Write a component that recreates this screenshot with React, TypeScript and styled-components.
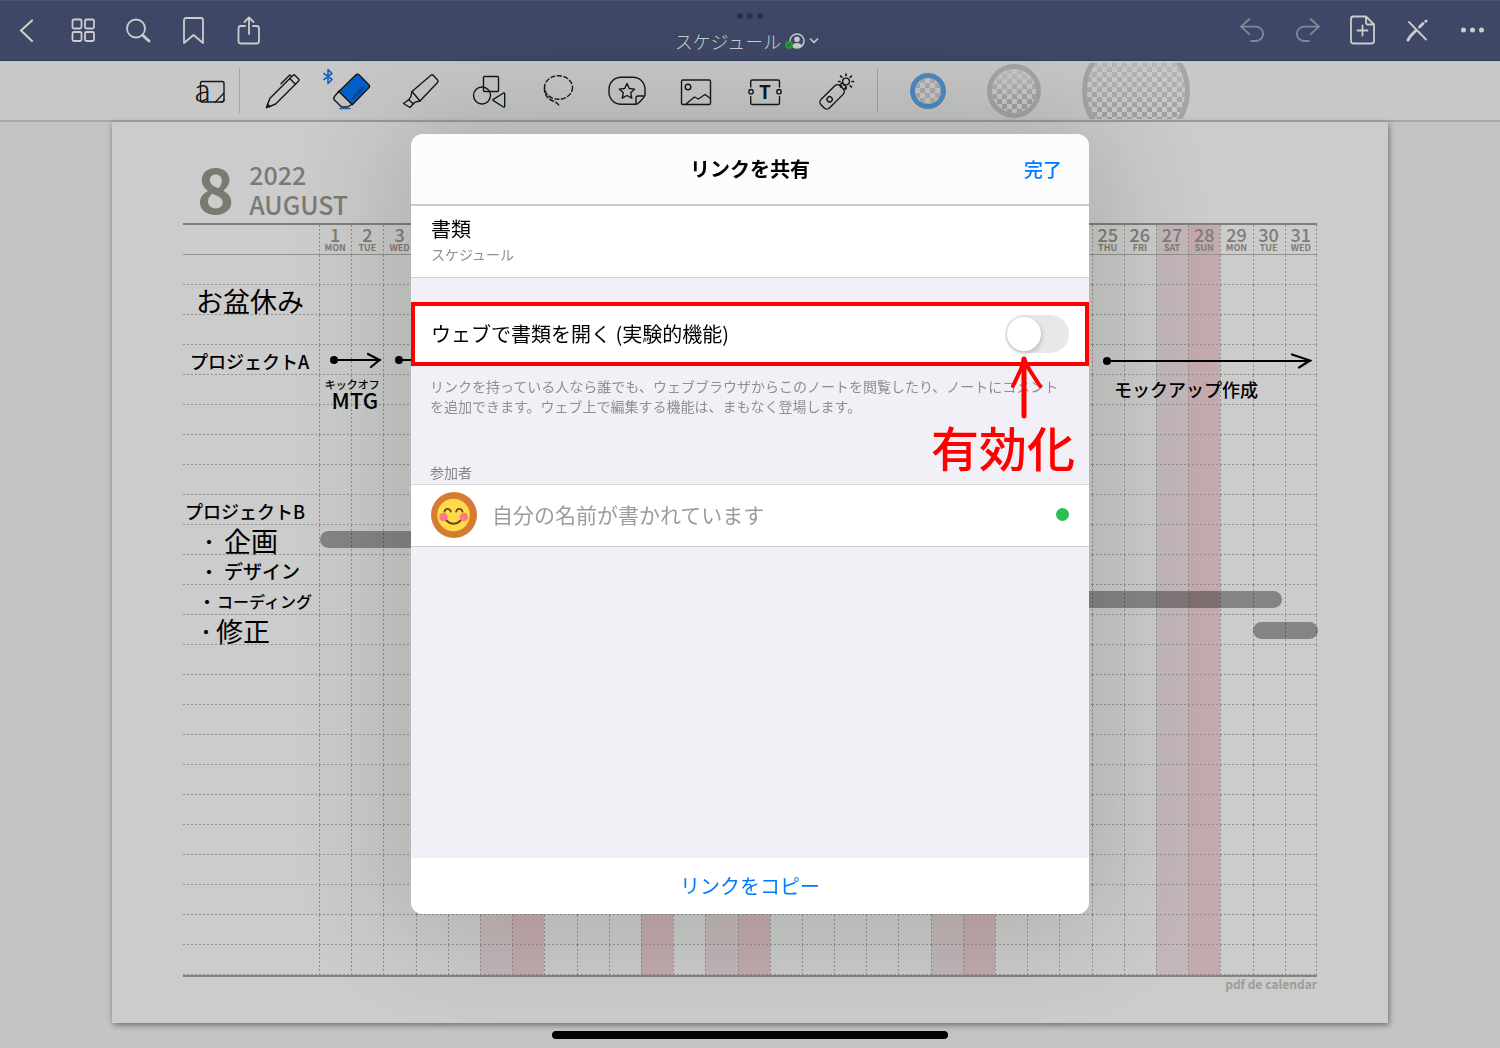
import React from "react";
import styled, { createGlobalStyle } from "styled-components";

const JP = `"Noto Sans CJK JP", "Noto Sans", sans-serif`;
const RED = "#ff0000";
const BLUE = "#007aff";

const GlobalStyle = createGlobalStyle`
  *, *::before, *::after { box-sizing: border-box; }
  body { margin: 0; background: #f6f6f6; font-family: ${JP}; color: #000; }
  button { appearance: none; border: 0; background: none; padding: 0; margin: 0; font-family: inherit; cursor: pointer; }
  svg { display: block; overflow: visible; }
`;

/* ---------- frame ---------- */

const Screen = styled.div`
  min-height: 100vh;
  display: flex;
  flex-direction: column;
`;

const NavBar = styled.header`
  height: 61px;
  display: grid;
  grid-template-columns: 1fr auto 1fr;
  background: #4e5a80;
  border-top: 1px solid #5c688c;
  border-bottom: 1px solid #3c4870;
`;

const NavGroup = styled.div<{ $end?: boolean }>`
  display: flex;
  align-items: center;
  justify-content: ${(p) => (p.$end ? "flex-end" : "flex-start")};
  padding-bottom: 2px;
`;

const NavButton = styled.button`
  width: 55px;
  height: 56px;
  display: grid;
  place-items: center;
  color: #fff;
  &:disabled { color: #a4aabc; }
`;

const TitleArea = styled.div`
  display: flex;
  flex-direction: column;
  align-items: center;
  gap: 7px;
  padding-top: 12px;
`;

const WindowDots = styled.div`
  display: flex;
  gap: 4px;
  i { width: 6px; height: 6px; border-radius: 50%; background: #2e3c68; }
`;

const TitleButton = styled.button`
  display: flex;
  align-items: center;
  gap: 4px;
  padding-right: 6px;
  color: #fff;
  font-size: 18px;
  font-weight: 300;
  line-height: 30px;
`;

const Toolbar = styled.div`
  height: 61px;
  display: flex;
  align-items: center;
  justify-content: center;
  padding-right: 128px;
  background: #fafafa;
  border-bottom: 2px solid #d0d0d0;
`;

const ToolButton = styled.button<{ $first?: boolean }>`
  width: ${(p) => (p.$first ? 56 : 69)}px;
  height: 56px;
  flex: none;
  display: grid;
  place-items: center;
  color: #1a1c20;
`;

const Tools = styled.div`
  display: flex;
  margin: 0 8px;
`;

const Divider = styled.span`
  width: 1px;
  height: 45px;
  flex: none;
  background: #ccc;
`;

const Sizes = styled.div`
  display: flex;
  align-items: center;
  gap: 41px;
  padding-left: 32px;
`;

const SizeWindow = styled.button`
  display: flex;
  align-items: center;
  max-height: 56px;
  overflow: hidden;
`;

const Ring = styled.span<{ $size: number; $active?: boolean }>`
  width: ${(p) => p.$size}px;
  height: ${(p) => p.$size}px;
  flex: none;
  border-radius: 50%;
  border: 5px solid ${(p) => (p.$active ? "#64acf4" : "#cfcfcf")};
  background:
    linear-gradient(rgba(250, 250, 250, ${(p) => (p.$active ? 0 : 0.8)}), rgba(250, 250, 250, 0) 75%),
    repeating-conic-gradient(${(p) => (p.$active ? "#d8d8d8" : "#cbcbcb")} 0 25%, #fcfcfc 0 50%) 0 0 / 10px 10px;
  background-clip: padding-box;
`;

/* ---------- calendar sheet ---------- */

const Canvas = styled.main`
  flex: 1;
  display: flex;
  flex-direction: column;
  align-items: center;
  padding: 0 112px 9px;
  background: #f6f6f6;
`;

const Sheet = styled.section`
  width: 100%;
  flex: 1;
  padding: 37px 71px 28px;
  background: #fff;
  box-shadow: 1px 2px 6px rgba(0, 0, 0, 0.45);
`;

const Heading = styled.h1`
  display: flex;
  align-items: flex-start;
  gap: 15px;
  height: 64px;
  margin: 0;
  padding-left: 14px;
  color: #9c9890;
  font-weight: 500;
`;

const MonthNumber = styled.span`
  font-size: 63px;
  font-weight: 700;
  line-height: 55px;
`;

const MonthName = styled.span`
  font-size: 25px;
  line-height: 30px;
`;

const CalendarArea = styled.div`
  position: relative;
`;

const Calendar = styled.table`
  width: 100%;
  table-layout: fixed;
  border-spacing: 0;
  border-bottom: 2px solid #a4a7a4;
`;

const dotRow = "linear-gradient(to right, #b4b4b4 2px, transparent 2px) 0 100% / 4px 1px repeat-x";
const dotCol = "linear-gradient(to bottom, #b4b4b4 2px, transparent 2px) 0 0 / 1px 4px repeat-y";
const dotEnd = "linear-gradient(to bottom, #b4b4b4 2px, transparent 2px) 100% 0 / 1px 4px repeat-y";

type Tone = "plain" | "sat" | "sun";
const tones: Record<Tone, string> = { plain: "transparent", sat: "#f5e5e8", sun: "#f5d5d9" };

const DayHead = styled.th<{ $tone: Tone; $last?: boolean }>`
  height: 32px;
  padding: 1px 0 0;
  border-top: 2px solid #9da09e;
  border-bottom: 1px solid #b5b8b5;
  background: ${(p) => (p.$last ? `${dotEnd}, ` : "")}${dotCol}, ${(p) => tones[p.$tone]};
  color: #9f9b93;
  font-weight: 500;
  text-align: center;
  vertical-align: top;
`;

const DayNumber = styled.span`
  display: block;
  font-size: 18px;
  line-height: 16px;
`;

const DayName = styled.span`
  display: block;
  font-size: 9px;
  font-weight: 700;
  line-height: 12px;
`;

const CornerHead = styled.td`
  border-top: 2px solid #9da09e;
  border-bottom: 1px solid #b5b8b5;
  padding: 0;
`;

const Cell = styled.td<{ $tone: Tone; $last?: boolean }>`
  height: 30px;
  padding: 0;
  background: ${(p) => (p.$last ? `${dotEnd}, ` : "")}${dotRow}, ${dotCol}, ${(p) => tones[p.$tone]};
`;

const RowLabel = styled.th<{ $size: number; $indent: number }>`
  height: 30px;
  padding: 4px 0 2px ${(p) => p.$indent}px;
  background: ${dotRow};
  font-size: ${(p) => p.$size}px;
  line-height: 24px;
  font-weight: ${(p) => (p.$size > 20 ? 400 : 500)};
  text-align: left;
  white-space: nowrap;
`;

const Bullet = styled.span<{ $gap: number }>`
  margin-right: ${(p) => p.$gap}px;
  font-size: 16px;
  font-weight: 700;
  vertical-align: top;
`;

const Credit = styled.p`
  margin: 0;
  color: #c9c4bc;
  font-size: 12px;
  font-weight: 700;
  line-height: 14px;
  text-align: right;
`;

/* ink that lies over the calendar */

const Ink = styled.div<{ $left: number; $width?: number; $top: number }>`
  position: absolute;
  left: ${(p) => p.$left}%;
  width: ${(p) => (p.$width ? `${p.$width}%` : "auto")};
  top: ${(p) => p.$top}px;
`;

const Marker = styled(Ink)`
  height: 17px;
  border-radius: 9px;
  background: rgba(0, 0, 0, 0.35);
`;

const ArrowInk = styled(Ink)`
  display: flex;
  align-items: center;
  height: 18px;
  &::before { content: ""; width: 8px; height: 8px; border-radius: 50%; background: #000; }
  svg { margin-left: -22px; }
`;

const ArrowShaft = styled.span`
  flex: 1;
  height: 2px;
  background: #000;
`;

const Note = styled(Ink)<{ $size: number }>`
  font-size: ${(p) => p.$size}px;
  line-height: 18px;
  font-weight: 500;
  white-space: nowrap;
`;

const HomeIndicator = styled.div`
  width: 396px;
  max-width: 60%;
  height: 8px;
  margin-top: 8px;
  border-radius: 4px;
  background: #000;
`;

/* ---------- share dialog ---------- */

const Scrim = styled.div`
  position: fixed;
  inset: 0;
  display: grid;
  place-items: center;
  background: rgba(0, 0, 0, 0.2);
`;

const Dialog = styled.section`
  position: relative;
  width: 678px;
  max-width: 100%;
  height: 780px;
  max-height: 100%;
  display: flex;
  flex-direction: column;
  border-radius: 12px;
  background: #f1f0f6;
  box-shadow: 0 0 120px 24px rgba(10, 30, 5, 0.16);
`;

const DialogHeader = styled.header`
  height: 72px;
  flex: none;
  display: grid;
  grid-template-columns: 1fr auto 1fr;
  align-items: center;
  padding: 0 27px;
  border-bottom: 2px solid #cbcbcd;
  border-radius: 12px 12px 0 0;
  background: #fcfcfd;
`;

const DialogTitle = styled.h2`
  grid-column: 2;
  margin: 0;
  font-size: 20px;
  font-weight: 700;
  line-height: 30px;
`;

const DoneButton = styled.button`
  justify-self: end;
  color: ${BLUE};
  font-size: 19px;
  font-weight: 500;
  line-height: 30px;
`;

const DocumentRow = styled.div`
  height: 72px;
  flex: none;
  padding: 8px 20px 0;
  border-bottom: 1px solid #cfcfd3;
  background: #fff;
`;

const RowTitle = styled.div`
  font-size: 20px;
  line-height: 30px;
`;

const RowSub = styled.div`
  color: #8e8e93;
  font-size: 14px;
  line-height: 20px;
`;

const ToggleRow = styled.label`
  height: 64px;
  flex: none;
  display: flex;
  align-items: center;
  justify-content: space-between;
  margin-top: 24px;
  padding: 0 16px;
  border: 4px solid ${RED};
  background: #fff;
  font-size: 20px;
  line-height: 30px;
`;

const Switch = styled.input`
  appearance: none;
  position: relative;
  width: 64px;
  height: 38px;
  margin: 0;
  border-radius: 19px;
  background: #e8e8ea;
  &::before {
    content: "";
    position: absolute;
    top: 2px;
    left: 2px;
    width: 34px;
    height: 34px;
    border-radius: 50%;
    background: #fff;
    box-shadow: 1px 2px 5px rgba(0, 0, 0, 0.2);
  }
  &:checked { background: #34c759; }
  &:checked::before { left: 28px; }
`;

const Hint = styled.p`
  margin: 0;
  padding: 10px 20px 0 19px;
  color: #8e8e93;
  font-size: 14px;
  line-height: 20px;
`;

const ListTitle = styled.h3`
  margin: 45px 0 0;
  padding: 0 19px;
  color: #85858a;
  font-size: 14px;
  font-weight: 400;
  line-height: 23px;
`;

const MemberRow = styled.div`
  height: 63px;
  flex: none;
  display: flex;
  align-items: center;
  gap: 15px;
  padding: 0 20px 2px;
  border-top: 1px solid #d6d6db;
  border-bottom: 1px solid #cfcfd3;
  background: #fff;
`;

const MemberName = styled.span`
  flex: 1;
  padding-bottom: 2px;
  color: #9c9c9c;
  font-size: 21px;
  line-height: 30px;
`;

const Online = styled.span`
  width: 13px;
  height: 13px;
  border-radius: 50%;
  background: #2cbf52;
`;

const CopyButton = styled.button`
  && {
    height: 56px;
    flex: none;
    margin-top: auto;
    border-radius: 0 0 12px 12px;
    background: #fff;
  }
  color: ${BLUE};
  font-size: 20px;
  line-height: 30px;
`;

const Callout = styled.div`
  position: absolute;
  top: 221px;
  right: 14px;
  display: flex;
  flex-direction: column;
  align-items: center;
  color: ${RED};
  font-size: 48px;
  font-weight: 500;
  line-height: 54px;
  pointer-events: none;
  svg { margin-left: 46px; }
`;

/* ---------- icons ---------- */

const NavIcon = ({ children, w = 2 }: { children: React.ReactNode; w?: number }) => (
  <svg width="32" height="32" viewBox="0 0 32 32" fill="none" stroke="currentColor" strokeWidth={w} strokeLinecap="round" strokeLinejoin="round" aria-hidden="true">
    {children}
  </svg>
);

const ToolIcon = ({ children }: { children: React.ReactNode }) => (
  <svg width="44" height="44" viewBox="0 0 44 44" fill="none" stroke="currentColor" strokeWidth="1.4" strokeLinecap="round" strokeLinejoin="round" aria-hidden="true">
    {children}
  </svg>
);

const UndoPath = <path d="M12.5 5 4 12.7l8.5 7.6M4 12.7h15a7 7 0 0 1 0 14.3h-5" />;

const leftNav: [string, React.ReactNode][] = [
  ["戻る", <NavIcon w={2.2}><path d="M20 6.5 9 16.5l11 10.500" /></NavIcon>],
  ["サムネイル", <NavIcon w={1.8}><rect x="5.5" y="5.5" width="9" height="9" rx="1.5" /><rect x="18" y="5.5" width="9" height="9" rx="1.5" /><rect x="5.5" y="18" width="9" height="9" rx="1.5" /><rect x="18" y="18" width="9" height="9" rx="1.5" /></NavIcon>],
  ["検索", <NavIcon w={1.8}><circle cx="14" cy="14.5" r="9" /><path d="m21 21.500 6 5.500" strokeWidth="3" /></NavIcon>],
  ["ブックマーク", <NavIcon w={1.8}><path d="M7 29V6a2 2 0 0 1 2-2h15a2 2 0 0 1 2 2v23l-9.500-8z" /></NavIcon>],
  ["共有", <NavIcon w={1.8}><path d="M13 12H9a2.500 2.500 0 0 0-2.500 2.500V27A2.500 2.500 0 0 0 9 29.500h15.500A2.500 2.500 0 0 0 27 27V14.500a2.500 2.500 0 0 0-2.500-2.500H21M17 20V3.500M12.500 8 17 3.500 21.500 8" /></NavIcon>],
];

const rightNav: [string, boolean, React.ReactNode][] = [
  ["取り消す", true, <NavIcon w={1.8}>{UndoPath}</NavIcon>],
  ["やり直す", true, <NavIcon w={1.8}><g transform="matrix(-1 0 0 1 31 0)">{UndoPath}</g></NavIcon>],
  ["ページを追加", false, <NavIcon w={1.8}><path d="M19 2.500H6.500A2.500 2.500 0 0 0 4 5v22a2.500 2.500 0 0 0 2.500 2.500h18A2.500 2.500 0 0 0 27 27V10.500zM19 2.500v6a2 2 0 0 0 2 2h6M15.500 11.500v10M10.500 16.500h10" /></NavIcon>],
  ["閲覧モード", false, <NavIcon w={1.8}><path d="m7 8 17 17.500" /><path d="m6 26 2.500-4 5-5M17.500 13l3.500-3.500M23.800 7.200l.2-.2" strokeWidth="3" /></NavIcon>],
  ["その他", false, <NavIcon><g fill="currentColor" stroke="none"><circle cx="6.500" cy="16" r="2.500" /><circle cx="15.500" cy="16" r="2.500" /><circle cx="24.500" cy="16" r="2.500" /></g></NavIcon>],
];

const ZoomWindowIcon = (
  <ToolIcon>
    <path d="M13 12.500h20a2 2 0 0 1 2 2V31a2 2 0 0 1-2 2H13a1.500 1.500 0 0 1-1.500-1.500V14a1.500 1.500 0 0 1 1.500-1.500z" />
    <path d="M26.500 33l8.500-9M32 33a3 3 0 0 0 3-3" strokeWidth="1.200" />
    <text x="5" y="33" fontSize="31" fontWeight="300" fontFamily="Noto Sans CJK JP" fill="currentColor" stroke="none">a</text>
  </ToolIcon>
);

const tools: [string, React.ReactNode][] = [
  ["ペン", (
    <ToolIcon>
      <g transform="rotate(45 22 23)">
        <path d="M18 8v28l2.500 6h3l2.500-6V8" />
        <path d="M18 8h8V3.500A1.500 1.500 0 0 0 24.500 2h-5A1.500 1.500 0 0 0 18 3.500zM18 5.500h-2.500V18" />
        <path d="m20.500 42 1.500 3 1.500-3z" fill="currentColor" />
      </g>
    </ToolIcon>
  )],
  ["消しゴム", (
    <ToolIcon>
      <path d="m10 22-4.500 5.500c-1 1-1 2.300 0 3.500l7 7h6l5-3z" fill="#f4f4f4" />
      <path d="M26.500 6.200 10 22.500l13.300 13.300 16.500-17c1-1 1-2 0-3L30.500 6.200c-1.300-1.300-2.700-1.300-4 0z" fill="#007aff" />
      <path d="m23 30.500 12-12.500" stroke="#1058b0" strokeWidth="3" strokeLinecap="butt" />
      <path d="M11 39.500h10" stroke="#2f7fe8" strokeWidth="1.600" />
      <path d="m-5 4.500 8 6-4 4V.500l4 4-8 6" stroke="#1c78f0" strokeWidth="1.600" />
    </ToolIcon>
  )],
  ["蛍光ペン", (
    <ToolIcon>
      <path d="M33.500 5.800 14 22.500c-1 3 0 5-3 8l-5.500 4 6.500 4 3.500-4c2.500-3 4-1.500 6.500-2.500l17.500-18.500c.8-.9.800-1.700 0-2.500l-4-4.500c-.700-.800-1.300-1-2-.700z" />
      <path d="m14 22.500 8 9.500M10.500 30.500l5 4.500" />
    </ToolIcon>
  )],
  ["シェイプ", (
    <ToolIcon>
      <rect x="16.500" y="7.500" width="15" height="15" rx="1" />
      <circle cx="15" cy="26.500" r="8.500" />
      <path d="M26.300 30.300 36.500 24q1.200-.5 1.200 1v12q0 1.500-1.200 1l-10.200-6.300q-1-.7 0-1.400z" />
    </ToolIcon>
  )],
  ["なげなわ", (
    <ToolIcon>
      <ellipse cx="22.500" cy="18.500" rx="14" ry="11.800" strokeDasharray="4 2.600" />
      <path d="M8.500 19c-.5 6 2.500 10.500 8.500 13 3 1.200 5.500 2.500 6.500 6" strokeDasharray="4 2.600" />
    </ToolIcon>
  )],
  ["ステッカー", (
    <ToolIcon>
      <path d="M31 35.300H16A12 12 0 0 1 4 23.300v-3a12 12 0 0 1 12-12h12a12 12 0 0 1 12 12V26c0 1.500-7 9.300-9 9.300zM31 35v-6a2 2 0 0 1 2-2h6.500" />
      <path d="m22 14.500 2.300 5 5.400.6-4 3.700 1.100 5.400-4.800-2.700-4.800 2.700 1.100-5.400-4-3.700 5.400-.6z" />
    </ToolIcon>
  )],
  ["画像", (
    <ToolIcon>
      <rect x="7.500" y="11" width="29" height="24.500" rx="1.500" />
      <circle cx="14" cy="18" r="2.800" />
      <path d="m12 35 8.500-7 3.800 2L31 25.500l5.500 4" />
    </ToolIcon>
  )],
  ["テキスト", (
    <ToolIcon>
      <path d="M7.700 18v-5.500a1.500 1.500 0 0 1 1.500-1.500H35a1.500 1.500 0 0 1 1.500 1.500V18M7.700 27.500V34a1.500 1.500 0 0 0 1.500 1.500H35a1.500 1.500 0 0 0 1.500-1.500v-6.500" />
      <circle cx="8" cy="22.700" r="2.200" /><circle cx="36" cy="22.700" r="2.200" />
      <text x="22" y="30" fontSize="19" fontWeight="700" textAnchor="middle" fill="currentColor" stroke="none">T</text>
    </ToolIcon>
  )],
  ["レーザー", (
    <ToolIcon>
      <g transform="translate(2 0) rotate(45 18.500 27.500)">
        <rect x="12.500" y="14.500" width="12" height="27" rx="4" />
        <circle cx="18.500" cy="31.500" r="2.600" />
        <path d="M15.500 14.500V11h6v3.500" />
      </g>
      <circle cx="34" cy="12.500" r="3.400" />
      <path d="M34 6.500V5M34 18.500V20M40 12.500h1.500M28 12.500h-1.500M38.300 8.200l1.100-1.100M29.700 8.200l-1.100-1.100M38.300 16.800l1.100 1.100M29.700 16.800l-1 1" strokeWidth="1.700" />
    </ToolIcon>
  )],
];

const SharedIcon = () => (
  <svg width="20" height="18" viewBox="0 0 20 18" aria-hidden="true">
    <circle cx="12" cy="9" r="7" fill="none" stroke="#fff" strokeWidth="1.500" />
    <circle cx="12" cy="7.200" r="2.800" fill="#fff" />
    <path d="M7 13.500c1-3.500 9-3.500 10 0-2.500 2.800-7.500 2.800-10 0z" fill="#fff" />
    <circle cx="4" cy="13" r="4" fill="#2cc24e" />
    <path d="m2.300 13 1.300 1.300 2.200-2.500" fill="none" stroke="#1b7a33" strokeWidth="1" />
  </svg>
);

const ChevronIcon = () => (
  <svg width="10" height="8" viewBox="0 0 10 8" fill="none" stroke="currentColor" strokeWidth="1.700" strokeLinecap="round" strokeLinejoin="round" aria-hidden="true">
    <path d="m1.500 2 3.500 3.500L8.500 2" />
  </svg>
);

const ArrowTip = () => (
  <svg width="22" height="18" viewBox="0 0 22 18" fill="none" stroke="#000" strokeWidth="2.200" strokeLinecap="round" aria-hidden="true">
    <path d="M3 2.500 21 8.500 10 15.500M16 9h4" />
  </svg>
);

const SmallArrowTip = () => (
  <svg width="22" height="18" viewBox="0 0 22 18" fill="none" stroke="#000" strokeWidth="2.200" strokeLinecap="round" aria-hidden="true">
    <path d="m9 3 11.500 6L12 16" />
  </svg>
);

const Avatar = () => (
  <svg width="46" height="46" viewBox="0 0 46 46" fill="none" strokeLinecap="round" aria-hidden="true">
    <circle cx="23" cy="23" r="23" fill="#d67c32" />
    <circle cx="22.500" cy="23" r="16.300" fill="#ffdb4c" />
    <circle cx="12.500" cy="25" r="4.200" fill="#ff7a7f" />
    <circle cx="33" cy="25" r="4.200" fill="#ff7a7f" />
    <path d="M13.500 19.500c1-3.500 5-3.500 6.300 0M25.200 19.500c1-3.500 5-3.500 6.300 0" stroke="#6b4a12" strokeWidth="1.900" />
    <path d="M15.500 28.500c4 4.300 10 4.300 14 0" stroke="#6b4a12" strokeWidth="1.900" />
  </svg>
);

const CalloutArrow = () => (
  <svg width="34" height="64" viewBox="0 0 34 64" fill="none" stroke={RED} strokeLinecap="round" strokeLinejoin="round" aria-hidden="true">
    <path d="M15 4v57" strokeWidth="5" />
    <path d="M15 4 12 14 4 31M15 4l5 10 11 17" strokeWidth="4" />
  </svg>
);

/* ---------- data ---------- */

const weekdays = ["MON", "TUE", "WED", "THU", "FRI", "SAT", "SUN"];
const holidays = [11];
const days = Array.from({ length: 31 }, (_, i) => {
  const weekday = weekdays[i % 7];
  const tone: Tone = weekday === "SUN" || holidays.includes(i + 1) ? "sun" : weekday === "SAT" ? "sat" : "plain";
  return { number: i + 1, weekday, tone };
});

type Label = { text: string; size: number; indent: number; bullet?: number };
const labels: Record<number, Label> = {
  1: { text: "お盆休み", size: 27, indent: 13 },
  3: { text: "プロジェクトA", size: 18, indent: 7 },
  8: { text: "プロジェクトB", size: 18, indent: 2 },
  9: { text: "企画", size: 27, indent: 18, bullet: 7 },
  10: { text: "デザイン", size: 19, indent: 18, bullet: 7 },
  11: { text: "コーディング", size: 16, indent: 16, bullet: 2 },
  12: { text: "修正", size: 27, indent: 15, bullet: 2 },
};

export default function App() {
  return (
    <>
      <GlobalStyle />
      <Screen>
        <NavBar>
          <NavGroup>
            {leftNav.map(([name, icon]) => (
              <NavButton key={name} aria-label={name}>{icon}</NavButton>
            ))}
          </NavGroup>
          <TitleArea>
            <WindowDots><i /><i /><i /></WindowDots>
            <TitleButton>
              スケジュール
              <SharedIcon />
              <ChevronIcon />
            </TitleButton>
          </TitleArea>
          <NavGroup $end>
            {rightNav.map(([name, off, icon]) => (
              <NavButton key={name} aria-label={name} disabled={off}>{icon}</NavButton>
            ))}
          </NavGroup>
        </NavBar>

        <Toolbar>
          <ToolButton $first aria-label="拡大ウインドウ">{ZoomWindowIcon}</ToolButton>
          <Divider />
          <Tools>
            {tools.map(([name, icon]) => (
              <ToolButton key={name} aria-label={name}>{icon}</ToolButton>
            ))}
          </Tools>
          <Divider />
          <Sizes>
            <SizeWindow aria-label="小"><Ring $size={36} $active /></SizeWindow>
            <SizeWindow aria-label="中"><Ring $size={54} /></SizeWindow>
            <SizeWindow aria-label="大"><Ring $size={108} /></SizeWindow>
          </Sizes>
        </Toolbar>

        <Canvas>
          <Sheet>
            <Heading>
              <MonthNumber>8</MonthNumber>
              <MonthName>2022<br />AUGUST</MonthName>
            </Heading>
            <CalendarArea>
              <Calendar>
                <colgroup>
                  <col style={{ width: "12%" }} />
                  {days.map((d) => <col key={d.number} />)}
                </colgroup>
                <thead>
                  <tr>
                    <CornerHead />
                    {days.map((d) => (
                      <DayHead key={d.number} scope="col" $tone={d.tone} $last={d.number === 31}>
                        <DayNumber>{d.number}</DayNumber>
                        <DayName>{d.weekday}</DayName>
                      </DayHead>
                    ))}
                  </tr>
                </thead>
                <tbody>
                  {Array.from({ length: 24 }, (_, row) => {
                    const label = labels[row];
                    return (
                      <tr key={row}>
                        <RowLabel scope="row" $size={label?.size ?? 18} $indent={label?.indent ?? 0}>
                          {label?.bullet !== undefined && <Bullet $gap={label.bullet}>・</Bullet>}
                          {label?.text}
                        </RowLabel>
                        {days.map((d) => <Cell key={d.number} $tone={d.tone} $last={d.number === 31} />)}
                      </tr>
                    );
                  })}
                </tbody>
              </Calendar>

              <ArrowInk $left={13} $width={4.5} $top={128}><ArrowShaft /><SmallArrowTip /></ArrowInk>
              <ArrowInk $left={18.7} $width={12} $top={128}><ArrowShaft /><SmallArrowTip /></ArrowInk>
              <ArrowInk $left={81.1} $width={18.4} $top={129}><ArrowShaft /><ArrowTip /></ArrowInk>
              <Note $left={12.5} $top={152} $size={11}>キックオフ</Note>
              <Note $left={13.1} $top={167} $size={22}>MTG</Note>
              <Note $left={82.1} $top={157} $size={18}>モックアップ作成</Note>
              <Marker $left={12.1} $width={24} $top={308} />
              <Marker $left={60} $width={36.9} $top={368} />
              <Marker $left={94.4} $width={5.7} $top={399} />
            </CalendarArea>
            <Credit>pdf de calendar</Credit>
          </Sheet>
          <HomeIndicator />
        </Canvas>
      </Screen>

      <Scrim>
        <Dialog role="dialog" aria-modal="true" aria-labelledby="share-title">
          <DialogHeader>
            <DialogTitle id="share-title">リンクを共有</DialogTitle>
            <DoneButton>完了</DoneButton>
          </DialogHeader>
          <DocumentRow>
            <RowTitle>書類</RowTitle>
            <RowSub>スケジュール</RowSub>
          </DocumentRow>
          <ToggleRow htmlFor="open-web">
            ウェブで書類を開く (実験的機能)
            <Switch id="open-web" type="checkbox" role="switch" />
          </ToggleRow>
          <Hint>
            リンクを持っている人なら誰でも、ウェブブラウザからこのノートを閲覧したり、ノートにコメントを追加できます。ウェブ上で編集する機能は、まもなく登場します。
          </Hint>
          <ListTitle>参加者</ListTitle>
          <MemberRow>
            <Avatar />
            <MemberName>自分の名前が書かれています</MemberName>
            <Online />
          </MemberRow>
          <CopyButton>リンクをコピー</CopyButton>
          <Callout>
            <CalloutArrow />
            有効化
          </Callout>
        </Dialog>
      </Scrim>
    </>
  );
}
